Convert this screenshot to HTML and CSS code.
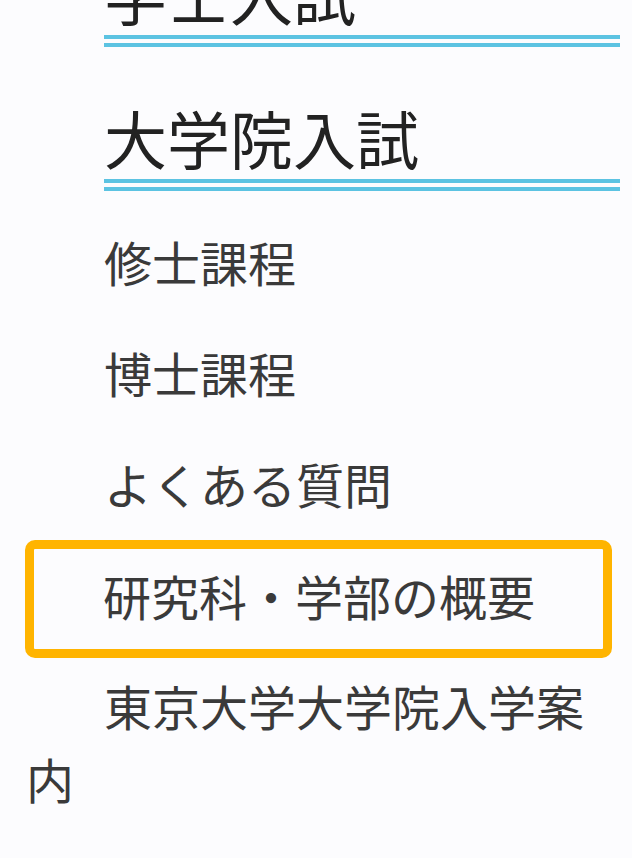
FILE: index.html
```html
<!DOCTYPE html>
<html lang="ja">
<head>
    <meta charset="UTF-8">
    <meta name="viewport" content="width=device-width, initial-scale=1.0">
    <title>入試情報</title>
    <link rel="stylesheet" href="styles.css">
</head>
<body>

<nav class="side-nav">
    <h2 class="nav-heading">学士入試</h2>

    <h2 class="nav-heading">大学院入試</h2>
    <ul class="nav-list">
        <li class="nav-item"><a href="#">修士課程</a></li>
        <li class="nav-item"><a href="#">博士課程</a></li>
        <li class="nav-item"><a href="#">よくある質問</a></li>
        <li class="nav-item nav-item-marked"><a href="#">研究科・学部の概要</a></li>
        <li class="nav-item"><a href="#">東京大学大学院入学案内</a></li>
    </ul>
</nav>

</body>
</html>
```

FILE: styles.css
```css
body {
    margin: 0;
    padding: 0;
    background-color: #fcfcfe;
    font-family: "Noto Sans CJK JP", "Noto Sans", sans-serif;
    color: #333;
}
.side-nav {
    display: flex;
    flex-direction: column;
    width: 594px;
    margin: -82px 0 0 26px;
}
.nav-heading {
    margin: 36px 0 15px 78px;
    padding-bottom: 4px;
    font-size: 63px;
    font-weight: normal;
    line-height: 77px;
    color: #222;
    border-bottom: 12px double #5cc3e2;
}
.nav-list {
    list-style: none;
    margin: 0;
    padding: 0;
}
.nav-item {
    padding: 19px 0;
    font-size: 48px;
    line-height: 73px;
    text-indent: 78px;
}
.nav-item a {
    color: #3a3a3a;
    text-decoration: none;
}
/* highlighted entry, drawn without pushing the rows below */
.nav-item-marked {
    margin: 1px 8px -8px -1px;
    padding: 10px 0 17px;
    border: 9px solid #ffb400;
    border-radius: 10px;
    text-indent: 69px;
}
```
